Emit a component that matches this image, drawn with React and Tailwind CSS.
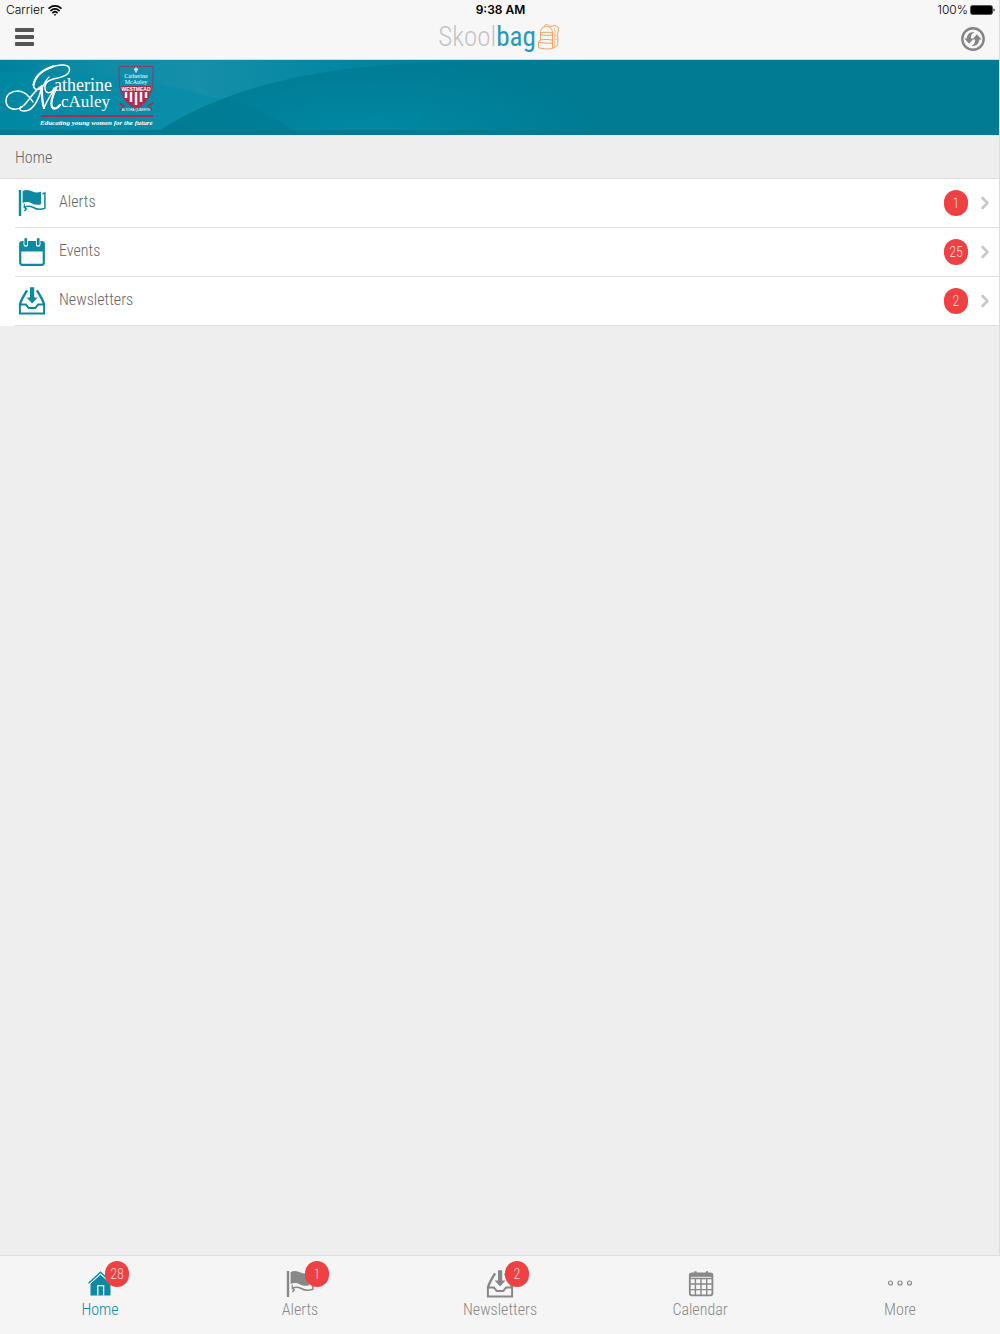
import React from 'react';
import { ChevronRight, Wifi } from 'lucide-react';

const sections = [
  { name: 'Alerts', count: 1, icon: FlagIcon },
  { name: 'Events', count: 25, icon: EventIcon },
  { name: 'Newsletters', count: 2, icon: InboxIcon },
];

const tabs = [
  { name: 'Home', count: 28, icon: HomeIcon, active: true },
  { name: 'Alerts', count: 1, icon: FlagIcon },
  { name: 'Newsletters', count: 2, icon: InboxIcon },
  { name: 'Calendar', icon: CalendarIcon },
  { name: 'More', icon: MoreIcon },
];

function FlagIcon({ className }) {
  return (
    <svg viewBox="0 0 28 28" className={className} fill="currentColor" aria-hidden="true">
      <path d="M.8 1h2.400v26H.8z" />
      <path d="M4.600 2c4-2 7-.8 10 .6 2.900 1.300 5.500 1.200 8.400.2v12.400c-3.300 1-6 .6-9-.8-3-1.500-6-1.900-9.400-.5z" />
      <path d="M24.300 4.700c.9 0 1.700-.3 2.600-.7v15.200c-4.500 1.800-8.100 1.300-11.600-.7-3.200-1.700-5.900-1.700-8.700-.4l1.600 1.800-1.800 2" fill="none" stroke="currentColor" strokeWidth="1.500" />
      <path d="M6.300 14.800v4.500" stroke="currentColor" strokeWidth="1.200" />
    </svg>
  );
}

function EventIcon({ className }) {
  return (
    <svg viewBox="0 0 28 28" className={className} aria-hidden="true">
      <rect x="2.200" y="4.200" width="23.600" height="22.600" rx="2" fill="none" stroke="currentColor" strokeWidth="2.200" />
      <path d="M2.500 4h23v9.500h-23z" fill="currentColor" />
      <path d="M7.800 4v2.500M20.200 4v2.500" stroke="white" strokeWidth="4.600" strokeLinecap="round" />
      <path d="M7.800 1.500v4.500M20.200 1.500v4.500" stroke="currentColor" strokeWidth="2.800" strokeLinecap="round" />
    </svg>
  );
}

function InboxIcon({ className }) {
  return (
    <svg viewBox="0 0 28 28" className={className} fill="none" stroke="currentColor" aria-hidden="true">
      <path d="M1.900 17.600h6l2.900 3.500h6.400l2.900-3.500h6v8.900H1.900z" strokeWidth="2" />
      <path d="M2 17.600c.5-3.600 3.300-7.800 7-14.300M26 17.600c-.5-3.600-3.300-7.800-7-14.300" strokeWidth="2.400" />
      <path d="M12 .3h4.200v10.200h3.400L14.100 16.600 8.600 10.500H12z" fill="currentColor" stroke="none" />
    </svg>
  );
}

function HomeIcon({ className }) {
  return (
    <svg viewBox="0 0 28 28" className={className} aria-hidden="true">
      <path d="M4.500 13.500 14.500 4.200l10 9.300v12h-20z" fill="currentColor" />
      <path d="m2.600 13.200 11.900-11 11.900 11" fill="none" stroke="currentColor" strokeWidth="1.400" />
      <path d="m3 14.800 11.500-10.600 11.500 10.600" fill="none" stroke="#f5f5f5" strokeWidth="0.900" />
      <path d="M11.800 25.500V15.600h5.800v9.900" fill="none" stroke="#f5f5f5" strokeWidth="1.300" />
    </svg>
  );
}

function CalendarIcon({ className }) {
  return (
    <svg viewBox="0 0 28 28" className={className} fill="none" stroke="currentColor" aria-hidden="true">
      <rect x="3.800" y="3.500" width="22.600" height="21.800" rx="2" strokeWidth="1.800" />
      <path d="M3 3.400h24v3.400H3z" fill="currentColor" stroke="none" />
      <path d="M9.500 1.200v3M21 1.200v3" strokeWidth="2.200" />
      <path d="M3 8.500h24M4 14h22M4 19.600h22M9.400 8.500v16.500M15 8.500v16.500M20.700 8.500v16.500" strokeWidth="1.400" />
    </svg>
  );
}

function MoreIcon({ className }) {
  return (
    <svg viewBox="0 0 28 28" className={className} fill="none" stroke="currentColor" strokeWidth="1.200" aria-hidden="true">
      <circle cx="4.500" cy="13" r="2" />
      <circle cx="14" cy="13" r="2" />
      <circle cx="23.500" cy="13" r="2" />
    </svg>
  );
}

function RefreshIcon() {
  return (
    <svg viewBox="0 0 24 24" className="h-6 w-6" aria-hidden="true">
      <circle cx="12" cy="12" r="10.700" fill="none" stroke="currentColor" strokeWidth="2.400" />
      <path d="M13.500 5C8.800 4.600 6 7.500 5.600 11.500H3.400l4.700 5.300 4.500-5.300H9.900c-.3-2.600.9-5 3.600-6.500z" fill="currentColor" />
      <path d="M10.500 19c4.700.4 7.500-2.500 7.900-6.500h2.200l-4.700-5.300-4.500 5.300h2.700c.3 2.600-.9 5-3.600 6.500z" fill="currentColor" />
    </svg>
  );
}

function Backpack() {
  return (
    <svg viewBox="0 0 24 28" className="h-7 w-6" fill="none" stroke="#f0a25f" strokeWidth="1" aria-hidden="true">
      <path d="M3.500 10.500C3.500 5 6 3.500 9.500 3.500S15.500 6 15.500 10v15.500c-4 1-9.500.5-14-.8V18.500l2-1.500z" />
      <path d="M7.500 3.500C7.500.8 12 .8 12 3.300M12.500 3.500l5.500-1 3.500 2c.5 3-1 5-1 8 .8 4 .5 7-.5 10.500l-4.500 2.500" />
      <path d="M3.500 10c4-1 8-1 12 0M4 12c3 .6 8 .6 11 0M3.500 17c4-.8 8-.8 12 .2M1.500 19c4 1 9 1.500 14 1" />
      <path d="M17 5c2 3 .5 6 .5 10s1 6-.5 9M18 13l2.500-1.500M18 17l2.500-1" strokeWidth="0.700" />
    </svg>
  );
}

function SchoolLogo() {
  return (
    <svg viewBox="0 0 160 70" className="relative h-[70px] w-40" role="img" aria-label="Catherine McAuley Westmead">
      <g fill="none" stroke="white" strokeLinecap="round" strokeLinejoin="round">
        <path d="M54 28c-1 5-8 7-9 1-.7-5 2-8 7-9.500C59 17.500 69 16 69.500 10 70 4 60 4 53 6.500 42 10 34 18 33.500 25c0 5 5 6 8.500 2 3-3 4-8 7-10" strokeWidth="1.500" />
        <path d="M53 6.500C42 10 35 17 33.500 25" strokeWidth="2.200" />
        <path d="M42 26C34 30 30 40 23 46c-7 6-17 3-17-5 0-7 6-10 12-10 8 0 13 8 15 11" strokeWidth="1.500" />
        <path d="M42 26c-2 9-6 20-13 24-5 2-10 1-9-2 .6-1.500 2-1 2-1M44 48c3-7 6-14 13-21" strokeWidth="1.500" />
        <path d="M42 26c-.5 8 0 15 2 22M56 28c-4 9-6 15-4 19 2 3 6 1 8-2" strokeWidth="2.300" />
      </g>
      <g fill="white" fontFamily="Liberation Serif, serif">
        <text x="54" y="31" fontSize="18">atherine</text>
        <text x="61" y="47" fontSize="17">cAuley</text>
        <text x="40" y="65" fontSize="7" fontStyle="italic" fontWeight="bold">Educating young women for the future</text>
        <text x="136" y="18" fontSize="6" textAnchor="middle">Catherine</text>
        <text x="136" y="24" fontSize="6" textAnchor="middle">McAuley</text>
      </g>
      <path d="M41 56h112" stroke="#a92c51" strokeWidth="2" />
      <path d="M119 6.500h34v14c0 12-6 23-17 29-11-6-17-17-17-29z" fill="none" stroke="#8c3b62" strokeWidth="1" />
      <path d="M122 31h28c-1 7-5 13-14 17-9-4-13-10-14-17z" fill="#bd234b" />
      <path d="M126 32v6M131 32v10M136 32v13M141 32v10M146 32v6" stroke="white" strokeWidth="2.500" />
      <path d="M136 7.500v5M134 9.500h4" stroke="white" strokeWidth="1.300" />
      <path d="m119 43 5 3-4 4M153 43l-5 3 4 4" fill="none" stroke="#a92c51" strokeWidth="1.500" />
      <path d="M121 26h30v6h-30z" fill="#aa2850" />
      <g fill="white" fontFamily="Liberation Sans, sans-serif" textAnchor="middle">
        <text x="136" y="31" fontSize="5" fontWeight="bold">WESTMEAD</text>
        <text x="136" y="51" fontSize="3">ALTIORA QUAERITE</text>
      </g>
    </svg>
  );
}

function CountBadge({ count, className = '' }) {
  return (
    <span className={`flex h-[26px] w-6 items-center justify-center rounded-[12px] bg-[#ef4143] text-sm text-[#ffd9d9] ${className}`}>
      {count}
    </span>
  );
}

function StatusBar() {
  return (
    <div className="grid h-5 grid-cols-3 items-center pr-1 pl-[6px] font-[Inter,sans-serif] text-xs text-black">
      <div className="flex items-center gap-1">
        Carrier
        <Wifi className="h-[14px] w-[14px]" strokeWidth={3} />
      </div>
      <div className="text-center font-semibold">9:38 AM</div>
      <div className="flex items-center justify-end gap-[2px]">
        100%
        <svg viewBox="0 0 25 10" className="h-[10px] w-[25px]" aria-hidden="true">
          <rect x="0.500" y="0.500" width="22" height="9" rx="2" fill="black" stroke="#555" />
          <path d="M23.500 3.500c1.500.5 1.500 2.500 0 3z" />
        </svg>
      </div>
    </div>
  );
}

function Header() {
  return (
    <header className="border-b border-[#cbdde2] bg-[#f7f7f7]">
      <StatusBar />
      <div className="flex h-[39px] items-center justify-between px-[14px] pb-[5px]">
        <button type="button" aria-label="Menu" className="flex w-6 flex-col gap-[3px] pl-px">
          <span className="h-1 w-[19px] rounded-[1px] bg-[#555]"></span>
          <span className="h-1 w-[19px] rounded-[1px] bg-[#555]"></span>
          <span className="h-1 w-[19px] rounded-[1px] bg-[#555]"></span>
        </button>
        <div className="flex items-center gap-px text-[27px] leading-8 text-[#c4c4c4]">
          <span>Skool<span className="font-normal text-[#2799b8]">bag</span></span>
          <Backpack />
        </div>
        <button type="button" aria-label="Refresh" className="pt-1 text-[#858585]">
          <RefreshIcon />
        </button>
      </div>
    </header>
  );
}

function Banner() {
  return (
    <div className="relative h-[75px] overflow-hidden border-b-[5px] border-[#007991] bg-[#007b94]">
      <svg viewBox="0 0 1000 70" preserveAspectRatio="xMinYMin slice" className="absolute inset-0 h-full w-full" aria-hidden="true">
        <defs>
          <linearGradient id="sweep" x1="0" x2="1">
            <stop offset="0" stopColor="#00829c" />
            <stop offset="0.100" stopColor="#0e8ca7" />
            <stop offset="0.200" stopColor="#168fa9" />
            <stop offset="0.320" stopColor="#0488a3" />
            <stop offset="0.450" stopColor="#007f99" />
            <stop offset="0.600" stopColor="#007b94" />
          </linearGradient>
          <radialGradient id="hill" gradientUnits="userSpaceOnUse" cx="0" cy="0" r="1" gradientTransform="matrix(230 0 0 75 370 75)">
            <stop offset="0" stopColor="#0089a4" />
            <stop offset="1" stopColor="#007b94" />
          </radialGradient>
        </defs>
        <path d="M0 0h1000v70H0z" fill="url(#sweep)" />
        <path d="M0 12c110-3 210 15 294 58H0z" fill="#008ba7" opacity="0.500" />
        <path d="M160 70C242 18 350 3 450 3h550v67z" fill="url(#hill)" />
        <path d="M160 70q33-20 68-32 38 14 66 32z" fill="#007991" opacity="0.500" />
      </svg>
      <SchoolLogo />
    </div>
  );
}

export default function App() {
  return (
    <div className="flex min-h-screen flex-col bg-[#eee] font-['Roboto_Condensed','Roboto',sans-serif] font-light text-[#666]">
      <div className="flex flex-1 flex-col border-r border-[#ddd]">
        <Header />
        <Banner />
        <main>
          <h1 className="flex h-11 items-center border-b border-[#ddd] px-[15px] pt-[2px] text-base">Home</h1>
          <ul className="bg-white">
            {sections.map(({ name, count, icon: Icon }) => (
              <li key={name} className="pl-[15px]">
                <a href="#" className="flex h-[49px] items-center border-b border-[#ddd] pr-1 pl-[3px]">
                  <Icon className="h-7 w-7 text-[#0e89a3]" />
                  <span className="ml-[13px] flex-1 pb-[3px] text-base">{name}</span>
                  <CountBadge count={count} />
                  <ChevronRight className="ml-[7px] h-5 w-5 text-[#c7c7c7]" strokeWidth={3} />
                </a>
              </li>
            ))}
          </ul>
        </main>
      </div>

      <nav className="grid h-[79px] grid-cols-5 border-t border-[#ddd] bg-[#f5f5f5]">
        {tabs.map(({ name, count, icon: Icon, active }) => (
          <a
            key={name}
            href="#"
            className={`flex flex-col items-center gap-px pt-[13px] text-base leading-5 ${active ? 'text-[#0e89a3]' : 'text-[#888]'}`}
          >
            <span className="relative">
              <Icon className="h-[30px] w-[28px]" />
              {count && <CountBadge count={count} className="absolute -top-2 left-[19px]" />}
            </span>
            {name}
          </a>
        ))}
      </nav>
    </div>
  );
}
